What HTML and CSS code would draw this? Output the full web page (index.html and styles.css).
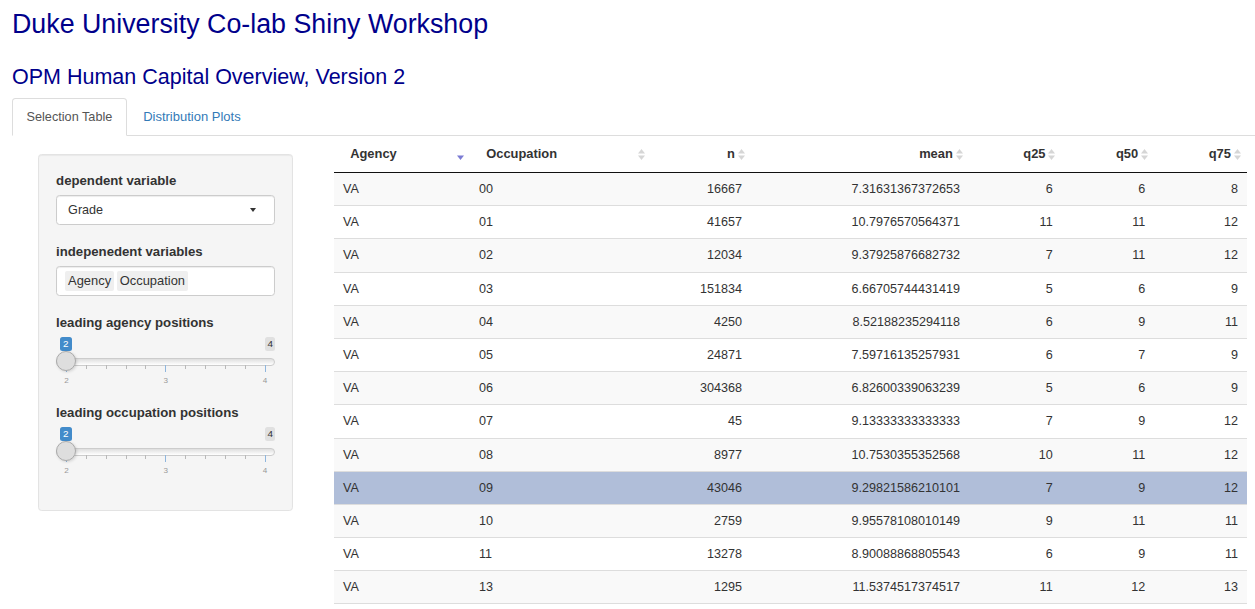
FILE: index.html
```html
<!DOCTYPE html>
<html>
<head>
<meta charset="utf-8">
<title>Duke University Co-lab Shiny Workshop</title>
<link rel="stylesheet" href="styles.css">
</head>
<body>
<div class="page">
  <h1 class="title">Duke University Co-lab Shiny Workshop</h1>
  <h2 class="subtitle">OPM Human Capital Overview, Version 2</h2>
  <ul class="tabs">
    <li class="tab active"><a>Selection Table</a></li>
    <li class="tab"><a>Distribution Plots</a></li>
  </ul>
  <div class="content">
    <aside class="sidebar">
      <div class="well">
        <div class="fg fg-select">
          <div class="lbl">dependent variable</div>
          <div class="select"><span>Grade</span><span class="caret"></span></div>
        </div>
        <div class="fg fg-multi">
          <div class="lbl">indepenedent variables</div>
          <div class="multi"><span class="item">Agency</span><span class="item">Occupation</span></div>
        </div>
        <div class="fg">
          <div class="lbl">leading agency positions</div>
          <div class="irs">
            <span class="irs-single">2</span>
            <span class="irs-max">4</span>
            <div class="irs-line"></div>
            <span class="irs-handle"></span>
            <div class="irs-grid">
              <i class="pol big"></i><i class="pol"></i><i class="pol"></i><i class="pol"></i><i class="pol"></i><i class="pol big"></i><i class="pol"></i><i class="pol"></i><i class="pol"></i><i class="pol"></i><i class="pol big"></i>
            </div>
            <div class="irs-text"><span>2</span><span>3</span><span>4</span></div>
          </div>
        </div>
        <div class="fg">
          <div class="lbl">leading occupation positions</div>
          <div class="irs">
            <span class="irs-single">2</span>
            <span class="irs-max">4</span>
            <div class="irs-line"></div>
            <span class="irs-handle"></span>
            <div class="irs-grid">
              <i class="pol big"></i><i class="pol"></i><i class="pol"></i><i class="pol"></i><i class="pol"></i><i class="pol big"></i><i class="pol"></i><i class="pol"></i><i class="pol"></i><i class="pol"></i><i class="pol big"></i>
            </div>
            <div class="irs-text"><span>2</span><span>3</span><span>4</span></div>
          </div>
        </div>
      </div>
    </aside>
    <main class="main">
      <table class="dt">
        <colgroup>
          <col class="c-agency"><col class="c-occ"><col class="c-n"><col class="c-mean"><col class="c-q"><col class="c-q"><col class="c-q">
        </colgroup>
        <thead>
          <tr>
            <th class="left">Agency<svg class="sort" viewBox="0 0 7 11"><polygon class="desc" points="0,6.5 7,6.5 3.5,11"/></svg></th>
            <th class="left">Occupation<svg class="sort" viewBox="0 0 7 11"><polygon points="3.5,0 7,4.5 0,4.5"/><polygon points="0,6.5 7,6.5 3.5,11"/></svg></th>
            <th class="num">n<svg class="sort" viewBox="0 0 7 11"><polygon points="3.5,0 7,4.5 0,4.5"/><polygon points="0,6.5 7,6.5 3.5,11"/></svg></th>
            <th class="num">mean<svg class="sort" viewBox="0 0 7 11"><polygon points="3.5,0 7,4.5 0,4.5"/><polygon points="0,6.5 7,6.5 3.5,11"/></svg></th>
            <th class="num">q25<svg class="sort" viewBox="0 0 7 11"><polygon points="3.5,0 7,4.5 0,4.5"/><polygon points="0,6.5 7,6.5 3.5,11"/></svg></th>
            <th class="num">q50<svg class="sort" viewBox="0 0 7 11"><polygon points="3.5,0 7,4.5 0,4.5"/><polygon points="0,6.5 7,6.5 3.5,11"/></svg></th>
            <th class="num">q75<svg class="sort" viewBox="0 0 7 11"><polygon points="3.5,0 7,4.5 0,4.5"/><polygon points="0,6.5 7,6.5 3.5,11"/></svg></th>
          </tr>
        </thead>
        <tbody>
          <tr><td>VA</td><td>00</td><td class="num">16667</td><td class="num">7.31631367372653</td><td class="num">6</td><td class="num">6</td><td class="num">8</td></tr>
          <tr><td>VA</td><td>01</td><td class="num">41657</td><td class="num">10.7976570564371</td><td class="num">11</td><td class="num">11</td><td class="num">12</td></tr>
          <tr><td>VA</td><td>02</td><td class="num">12034</td><td class="num">9.37925876682732</td><td class="num">7</td><td class="num">11</td><td class="num">12</td></tr>
          <tr><td>VA</td><td>03</td><td class="num">151834</td><td class="num">6.66705744431419</td><td class="num">5</td><td class="num">6</td><td class="num">9</td></tr>
          <tr><td>VA</td><td>04</td><td class="num">4250</td><td class="num">8.52188235294118</td><td class="num">6</td><td class="num">9</td><td class="num">11</td></tr>
          <tr><td>VA</td><td>05</td><td class="num">24871</td><td class="num">7.59716135257931</td><td class="num">6</td><td class="num">7</td><td class="num">9</td></tr>
          <tr><td>VA</td><td>06</td><td class="num">304368</td><td class="num">6.82600339063239</td><td class="num">5</td><td class="num">6</td><td class="num">9</td></tr>
          <tr><td>VA</td><td>07</td><td class="num">45</td><td class="num">9.13333333333333</td><td class="num">7</td><td class="num">9</td><td class="num">12</td></tr>
          <tr><td>VA</td><td>08</td><td class="num">8977</td><td class="num">10.7530355352568</td><td class="num">10</td><td class="num">11</td><td class="num">12</td></tr>
          <tr class="selected"><td>VA</td><td>09</td><td class="num">43046</td><td class="num">9.29821586210101</td><td class="num">7</td><td class="num">9</td><td class="num">12</td></tr>
          <tr><td>VA</td><td>10</td><td class="num">2759</td><td class="num">9.95578108010149</td><td class="num">9</td><td class="num">11</td><td class="num">11</td></tr>
          <tr><td>VA</td><td>11</td><td class="num">13278</td><td class="num">8.90088868805543</td><td class="num">6</td><td class="num">9</td><td class="num">11</td></tr>
          <tr><td>VA</td><td>13</td><td class="num">1295</td><td class="num">11.5374517374517</td><td class="num">11</td><td class="num">12</td><td class="num">13</td></tr>
        </tbody>
      </table>
    </main>
  </div>
</div>
</body>
</html>
```

FILE: styles.css
```css
html { overflow: hidden; }
body {
  margin: 0;
  font-family: "Liberation Sans", Arial, Helvetica, sans-serif;
  font-size: 12.6px;
  line-height: 18px;
  color: #333;
  background: #fff;
}
.page { padding-left: 12px; }

.title {
  margin: 9px 0 0;
  font-size: 26.8px;
  line-height: 30px;
  font-weight: normal;
  color: #00008b;
}
.subtitle {
  margin: 26px 0 0;
  font-size: 21.5px;
  line-height: 24px;
  font-weight: normal;
  color: #00008b;
}

.tabs {
  display: flex;
  list-style: none;
  margin: 9px 0 0;
  padding: 0;
  border-bottom: 1px solid #ddd;
}
.tab { margin-bottom: -1px; }
.tab a {
  display: block;
  padding: 9px 13.5px;
  margin-right: 1.8px;
  line-height: 18px;
  font-size: 12.7px;
  border: 1px solid transparent;
  border-radius: 3.6px 3.6px 0 0;
  color: #337ab7;
}
.tab + .tab a { font-size: 13px; }
.tab.active a {
  color: #555;
  background: #fff;
  border-color: #ddd #ddd transparent;
}

.content { display: flex; align-items: flex-start; }
.sidebar { margin-left: 26px; width: 255px; margin-top: 18px; }
.main { margin-left: 41px; width: 913px; }

.well {
  background: #f5f5f5;
  border: 1px solid #e3e3e3;
  border-radius: 3.6px;
  padding: 17.1px 17.1px 16px;
  box-shadow: inset 0 1px 1px rgba(0,0,0,.05);
}
.fg { margin-bottom: 13.5px; }
.fg-select { margin-bottom: 17.5px; }
.fg-multi { margin-bottom: 17.5px; }
.lbl {
  font-weight: bold;
  font-size: 13.2px;
  margin-bottom: 4.5px;
}
.fg-multi .lbl { margin-bottom: 5.5px; }

.select {
  display: flex;
  align-items: center;
  justify-content: space-between;
  box-sizing: border-box;
  height: 30.6px;
  padding: 0 18px 0 11px;
  background: #fff;
  border: 1px solid #ccc;
  border-radius: 3.6px;
  box-shadow: inset 0 1px 1px rgba(0,0,0,.075);
}
.caret {
  width: 0; height: 0;
  border-style: solid;
  border-width: 4px 3.5px 0 3.5px;
  border-color: #333 transparent transparent;
}

.multi {
  display: flex;
  align-items: center;
  gap: 2.7px;
  box-sizing: border-box;
  height: 30px;
  padding: 0 8px;
  background: #fff;
  border: 1px solid #ccc;
  border-radius: 3.6px;
  box-shadow: inset 0 1px 1px rgba(0,0,0,.075);
}
.item {
  background: #efefef;
  padding: 1px 3px;
  border-radius: 2px;
  font-size: 12.9px;
  line-height: 17.7px;
}

.irs {
  position: relative;
  box-sizing: border-box;
  height: 54px;
  padding-top: 22.3px;
}
.irs-single, .irs-max {
  position: absolute;
  top: 1.3px;
  font-size: 9.9px;
  line-height: 13.2px;
  border-radius: 2.5px;
}
.irs-single {
  left: 4px;
  padding: 0 3px;
  background: #428bca;
  color: #fff;
}
.irs-max {
  right: 0;
  padding: 0 2px;
  background: #e0e0e0;
  color: #333;
}
.irs-line {
  box-sizing: border-box;
  height: 7.4px;
  border: 1px solid #cccccc;
  border-radius: 8px;
  background: linear-gradient(to bottom, #dedede, #ffffff);
}
.irs-handle {
  position: absolute;
  left: 0;
  top: 15.3px;
  box-sizing: border-box;
  width: 20px;
  height: 20px;
  border-radius: 50%;
  border: 1px solid #ababab;
  background: #dedede;
  box-shadow: 1px 1px 3px rgba(0,0,0,.15);
}
.irs-grid {
  display: flex;
  justify-content: space-between;
  align-items: flex-start;
  height: 7px;
  margin: -0.7px 9.3px 0 10px;
}
.pol {
  display: block;
  width: 1px;
  height: 4px;
  background: #b9b9b9;
}
.pol.big { height: 7px; background: #8fb6dd; }
.irs-text {
  display: flex;
  justify-content: space-between;
  margin: 4px 9.3px 0 10px;
  font-size: 8.1px;
  line-height: 10px;
  color: #999;
}
.irs-text span {
  display: flex;
  justify-content: center;
  width: 1px;
  white-space: nowrap;
}

.dt {
  width: 913px;
  table-layout: fixed;
  border-collapse: separate;
  border-spacing: 0;
}
.c-agency { width: 136px; }
.c-occ { width: 181px; }
.c-n { width: 100px; }
.c-mean { width: 218px; }
.c-q { width: 92.7px; }

.dt th {
  position: relative;
  padding: 9px 16.2px 9px 9px;
  line-height: 18px;
  font-size: 12.9px;
  font-weight: bold;
  text-align: left;
  border-bottom: 1px solid #111;
}
.dt th.left { padding-left: 16.2px; }
.dt th.num { text-align: right; }
.sort {
  position: absolute;
  right: 6.5px;
  top: 50%;
  margin-top: -5px;
  width: 7px;
  height: 11px;
  fill: #d6d6d6;
}
.sort .desc { fill: #7b7bd4; }

.dt td {
  padding: 7.1px 9px;
  line-height: 18px;
  border-top: 1px solid #ddd;
  white-space: nowrap;
}
.dt td.num { text-align: right; }
.dt tbody tr:first-child td { border-top: none; }
.dt tbody tr:last-child td { border-bottom: 1px solid #ddd; }
.dt tbody tr:nth-child(odd) td { background: #f9f9f9; }
.dt tbody tr.selected td { background: #b0bed9; }
```
